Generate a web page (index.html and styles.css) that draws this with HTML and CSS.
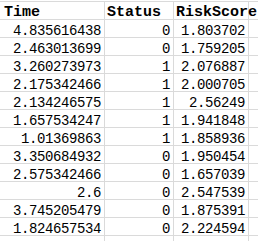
FILE: index.html
```html
<!DOCTYPE html>
<html>
<head>
<meta charset="utf-8">
<link rel="stylesheet" href="styles.css">
</head>
<body>
<div class="sheet">
  <div class="cell head first">Time</div><div class="cell head">Status</div><div class="cell head">RiskScore</div><div class="cell last"></div>
  <div class="cell num">4.835616438</div><div class="cell num">0</div><div class="cell num">1.803702</div><div class="cell last"></div>
  <div class="cell num">2.463013699</div><div class="cell num">0</div><div class="cell num">1.759205</div><div class="cell last"></div>
  <div class="cell num">3.260273973</div><div class="cell num">1</div><div class="cell num">2.076887</div><div class="cell last"></div>
  <div class="cell num">2.175342466</div><div class="cell num">1</div><div class="cell num">2.000705</div><div class="cell last"></div>
  <div class="cell num">2.134246575</div><div class="cell num">1</div><div class="cell num">2.56249</div><div class="cell last"></div>
  <div class="cell num">1.657534247</div><div class="cell num">1</div><div class="cell num">1.941848</div><div class="cell last"></div>
  <div class="cell num">1.01369863</div><div class="cell num">1</div><div class="cell num">1.858936</div><div class="cell last"></div>
  <div class="cell num">3.350684932</div><div class="cell num">0</div><div class="cell num">1.950454</div><div class="cell last"></div>
  <div class="cell num">2.575342466</div><div class="cell num">0</div><div class="cell num">1.657039</div><div class="cell last"></div>
  <div class="cell num">2.6</div><div class="cell num">0</div><div class="cell num">2.547539</div><div class="cell last"></div>
  <div class="cell num">3.745205479</div><div class="cell num">0</div><div class="cell num">1.875391</div><div class="cell last"></div>
  <div class="cell num">1.824657534</div><div class="cell num">0</div><div class="cell num">2.224594</div><div class="cell last"></div>
  <div class="cell tail"></div><div class="cell tail"></div><div class="cell tail"></div><div class="cell tail last"></div>
</div>
</body>
</html>
```
FILE: styles.css
```css
html, body {
  margin: 0;
  padding: 0;
  background: #ffffff;
}
.sheet {
  margin-top: 1px;
  border-top: 1px solid #dadada;
  display: grid;
  grid-template-columns: 105px 69px 75px 9px;
  color: #000000;
}
.cell {
  box-sizing: border-box;
  height: 18px;
  border-right: 1px solid #dadada;
  border-bottom: 1px solid #dadada;
  white-space: nowrap;
}
.last {
  border-right: none;
}
.tail {
  height: 5px;
  border-bottom: none;
}
.head {
  font-family: "Liberation Mono", "Courier New", monospace;
  font-weight: bold;
  font-size: 15px;
  line-height: 17px;
  padding-top: 2px;
  padding-left: 2px;
  position: relative;
  z-index: 1;
}
.head.first {
  padding-left: 4px;
}
.num {
  font-family: "Liberation Mono", "Courier New", monospace;
  font-size: 14px;
  letter-spacing: -0.4px;
  line-height: 17px;
  padding-top: 3px;
  padding-right: 3px;
  text-align: right;
}
```
